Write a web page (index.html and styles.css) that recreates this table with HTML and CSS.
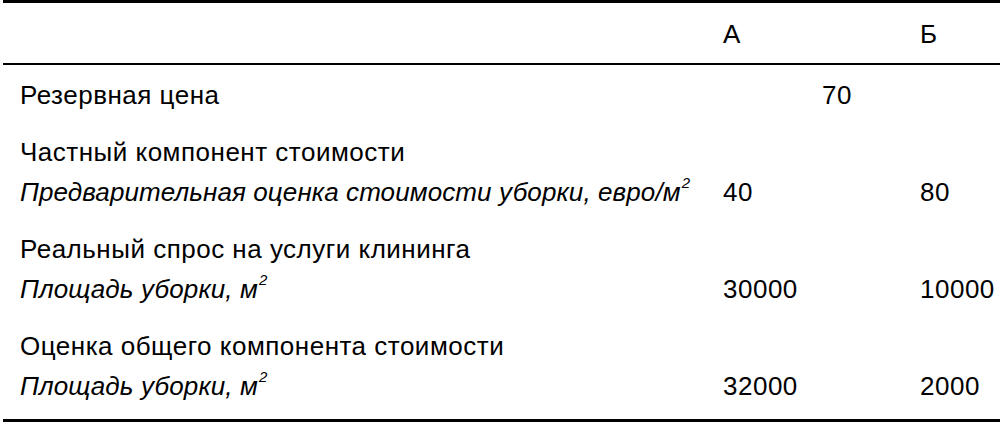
FILE: index.html
```html
<!DOCTYPE html>
<html lang="ru">
<head>
<meta charset="utf-8">
<title>Таблица</title>
<link rel="stylesheet" href="styles.css">
</head>
<body>
<div class="table">
  <div class="row head">
    <div class="cell label"></div>
    <div class="cell">А</div>
    <div class="cell">Б</div>
  </div>
  <div class="body">
    <div class="row first">
      <div class="cell label">Резервная цена</div>
      <div class="cell span"><span class="mid">70</span></div>
    </div>
    <div class="row group">
      <div class="cell label">Частный компонент стоимости</div>
      <div class="cell"></div>
      <div class="cell"></div>
    </div>
    <div class="row">
      <div class="cell label it">Предварительная оценка стоимости уборки, евро/м<sup class="sq">2</sup></div>
      <div class="cell">40</div>
      <div class="cell">80</div>
    </div>
    <div class="row group">
      <div class="cell label">Реальный спрос на услуги клининга</div>
      <div class="cell"></div>
      <div class="cell"></div>
    </div>
    <div class="row">
      <div class="cell label it">Площадь уборки, м<sup class="sq">2</sup></div>
      <div class="cell">30000</div>
      <div class="cell">10000</div>
    </div>
    <div class="row group">
      <div class="cell label">Оценка общего компонента стоимости</div>
      <div class="cell"></div>
      <div class="cell"></div>
    </div>
    <div class="row">
      <div class="cell label it">Площадь уборки, м<sup class="sq">2</sup></div>
      <div class="cell">32000</div>
      <div class="cell">2000</div>
    </div>
  </div>
</div>
</body>
</html>
```
FILE: styles.css
```css
html, body {
  margin: 0;
  padding: 0;
  background: #ffffff;
}
body {
  font-family: "Liberation Sans", Arial, sans-serif;
  font-size: 26px;
  letter-spacing: 0.5px;
  color: #000;
  width: 1000px;
  height: 425px;
  overflow: hidden;
}
.table {
  margin-left: 3px;
  width: 997px;
  border-top: 3px solid #000;
  border-bottom: 3px solid #000;
  box-sizing: border-box;
}
.row {
  display: grid;
  grid-template-columns: 720px 197px 80px;
  line-height: 40px;
  height: 40px;
  white-space: nowrap;
}
.head {
  height: 62px;
  padding-top: 11px;
  box-sizing: border-box;
  border-bottom: 2px solid #000;
}
.body {
  padding-top: 10px;
  padding-bottom: 13px;
}
.group {
  margin-top: 17px;
}
.label {
  padding-left: 17px;
}
.it {
  font-style: italic;
  letter-spacing: 0.1px;
}
.sq {
  font-size: 15px;
  line-height: 0;
  position: relative;
  top: -3px;
  vertical-align: super;
  margin-left: 1px;
}
.span {
  grid-column: 2 / 4;
}
.mid {
  padding-left: 99px;
}
```
